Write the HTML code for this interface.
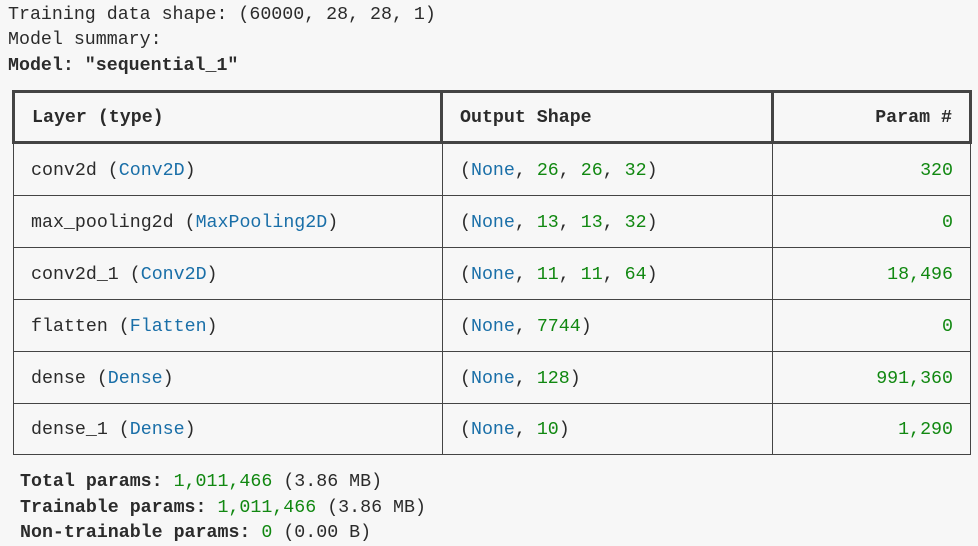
<!DOCTYPE html>
<html><head><style>
body{margin:0;width:978px;height:539px;background:#f7f7f7;overflow:hidden;font-family:"Liberation Mono",monospace;font-size:18.3px;color:#2b2b2b;position:relative}
.l{position:absolute;left:8px;white-space:pre;line-height:25px}
.b{font-weight:bold}
.g{color:#118811}.c{color:#1a6fa8}
.cell{position:absolute;box-sizing:border-box;border:1px solid #444;white-space:pre;display:flex;align-items:center;padding:2px 17px 0}
.h{border:3px solid #444;font-weight:bold}
.r{justify-content:flex-end}
</style></head><body>
<div class="l" style="top:3px">Training data shape: (60000, 28, 28, 1)</div>
<div class="l" style="top:28px">Model summary:</div>
<div class="l b" style="top:54px">Model: "sequential_1"</div>

<div class="cell h" style="left:12px;top:90px;width:431px;height:54px">Layer (type)</div>
<div class="cell h" style="left:440px;top:90px;width:334px;height:54px">Output Shape</div>
<div class="cell h r" style="left:771px;top:90px;width:201px;height:54px">Param #</div>

<div class="cell" style="left:13px;top:143px;width:430px;height:53px">conv2d (<span class="c">Conv2D</span>)</div>
<div class="cell" style="left:442px;top:143px;width:331px;height:53px">(<span class="c">None</span>, <span class="g">26</span>, <span class="g">26</span>, <span class="g">32</span>)</div>
<div class="cell r g" style="left:772px;top:143px;width:199px;height:53px">320</div>

<div class="cell" style="left:13px;top:195px;width:430px;height:53px">max_pooling2d (<span class="c">MaxPooling2D</span>)</div>
<div class="cell" style="left:442px;top:195px;width:331px;height:53px">(<span class="c">None</span>, <span class="g">13</span>, <span class="g">13</span>, <span class="g">32</span>)</div>
<div class="cell r g" style="left:772px;top:195px;width:199px;height:53px">0</div>

<div class="cell" style="left:13px;top:247px;width:430px;height:53px">conv2d_1 (<span class="c">Conv2D</span>)</div>
<div class="cell" style="left:442px;top:247px;width:331px;height:53px">(<span class="c">None</span>, <span class="g">11</span>, <span class="g">11</span>, <span class="g">64</span>)</div>
<div class="cell r g" style="left:772px;top:247px;width:199px;height:53px">18,496</div>

<div class="cell" style="left:13px;top:299px;width:430px;height:53px">flatten (<span class="c">Flatten</span>)</div>
<div class="cell" style="left:442px;top:299px;width:331px;height:53px">(<span class="c">None</span>, <span class="g">7744</span>)</div>
<div class="cell r g" style="left:772px;top:299px;width:199px;height:53px">0</div>

<div class="cell" style="left:13px;top:351px;width:430px;height:53px">dense (<span class="c">Dense</span>)</div>
<div class="cell" style="left:442px;top:351px;width:331px;height:53px">(<span class="c">None</span>, <span class="g">128</span>)</div>
<div class="cell r g" style="left:772px;top:351px;width:199px;height:53px">991,360</div>

<div class="cell" style="left:13px;top:403px;width:430px;height:52px">dense_1 (<span class="c">Dense</span>)</div>
<div class="cell" style="left:442px;top:403px;width:331px;height:52px">(<span class="c">None</span>, <span class="g">10</span>)</div>
<div class="cell r g" style="left:772px;top:403px;width:199px;height:52px">1,290</div>

<div class="l" style="left:20px;top:470px"><span class="b">Total params: </span><span class="g">1,011,466</span> (3.86 MB)</div>
<div class="l" style="left:20px;top:496px"><span class="b">Trainable params: </span><span class="g">1,011,466</span> (3.86 MB)</div>
<div class="l" style="left:20px;top:521px"><span class="b">Non-trainable params: </span><span class="g">0</span> (0.00 B)</div>
</body></html>
